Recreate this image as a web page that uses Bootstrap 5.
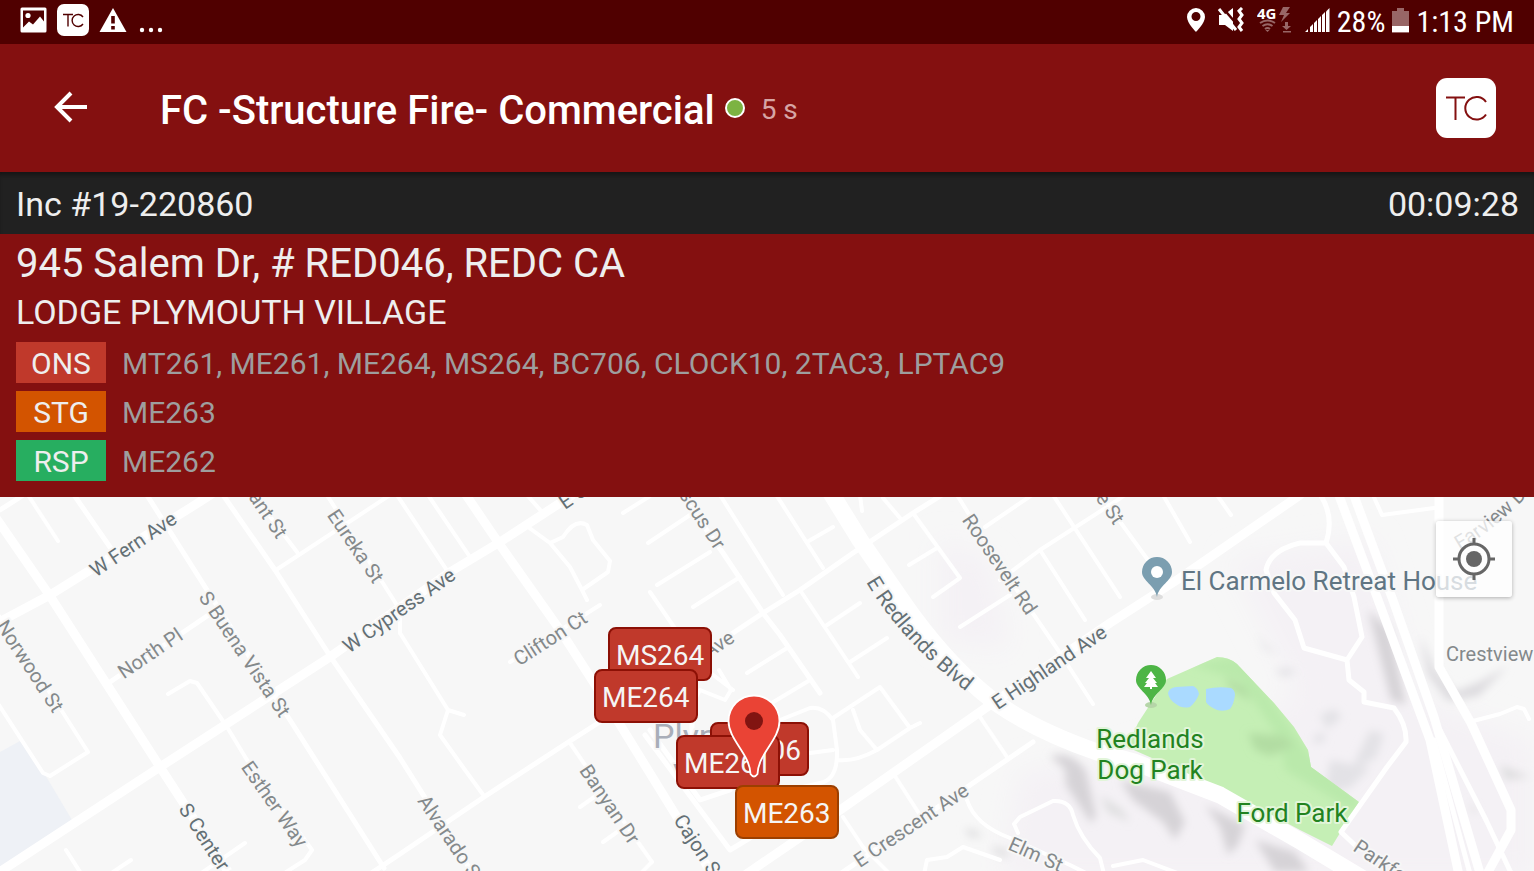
<!DOCTYPE html>
<html lang="en">
<head>
<meta charset="utf-8">
<meta name="viewport" content="width=device-width, initial-scale=1">
<title>FC -Structure Fire- Commercial</title>
<link href="https://cdn.jsdelivr.net/npm/bootstrap@5.3.0/dist/css/bootstrap.min.css" rel="stylesheet">
<style>
  body { font-family: Roboto, "Liberation Sans", sans-serif; background: #841010; color: #eee; }
  .status-bar { height: 44px; background: #500000; color: #fff; padding: 0 20px 4px; font-family: "Roboto Condensed", Roboto, sans-serif; font-size: 30px; line-height: 40px; }
  .status-left { gap: 10px; }
  .status-right { gap: 12px; }
  .status-power { gap: 7px; }
  .app-bar { height: 128px; padding: 4px 38px 0 48px; }
  .app-title { font-size: 40px; line-height: 48px; font-weight: 500; color: #fff; margin-left: 66px; padding-top: 2px; }
  .live-dot { width: 20px; height: 20px; border: 2px solid #fff; border-radius: 50%; background: #7cb342; margin: 0 16px 4px 10px; }
  .age { font-size: 28px; line-height: 48px; color: #d6a5a5; }
  .inc-bar { height: 62px; padding: 2px 15px 0 16px; background: #212121; font-size: 34px; line-height: 60px; box-shadow: inset 0 5px 4px -2px #151515; }
  .details { padding: 6px 16px 16px; }
  .address { font-size: 40px; line-height: 48px; }
  .place { font-size: 34px; line-height: 48px; margin-bottom: 6px; }
  .units { font-size: 30px; line-height: 41px; color: #9e9e9e; }
  .unit-tag { width: 90px; padding-top: 2px; line-height: 39px; color: #eee; text-align: center; }
  .unit-list { padding-top: 2px; line-height: 39px; }
  .ons { background: #c0392b; }
  .stg { background: #d35400; }
  .rsp { background: #27ae60; }
  .map { background: #f7f7f7; min-height: 320px; }
  .roads path { fill: none; stroke: #fff; stroke-width: 4; stroke-linejoin: round; stroke-linecap: round; }
  .roads .mid { stroke-width: 5; }
  .roads .wide { stroke-width: 9; }
  .roads .main { stroke-width: 17; }
  .labels text { font-size: 20px; fill: #84898b; stroke: #f7f7f7; stroke-width: 4px; paint-order: stroke; stroke-linejoin: round; }
  .labels .major { fill: #647075; }
  .labels .arterial { font-size: 21px; }
  .labels .poi { font-size: 26px; fill: #607583; }
  .labels .park { font-size: 26px; fill: #22831f; stroke: #e2f5d9; }
  .labels .town { font-size: 34px; fill: #a9aeb9; }
  .unit-pin { position: absolute; height: 54px; padding: 4px 6px 0; border: 2px solid #8c1005; border-radius: 8px; background: #c0392b; color: #f5f5f5; font-size: 28px; line-height: 46px; white-space: nowrap; }
  .unit-pin.staging { background: #d35400; border-color: #9c3f00; }
  .p-ms264 { left: 608px; top: 130px; }
  .p-me264 { left: 594px; top: 172px; }
  .p-bc706 { left: 710px; top: 225px; }
  .p-me261 { left: 676px; top: 238px; }
  .p-me263 { left: 735px; top: 288px; }
  .incident { position: absolute; left: 727px; top: 197px; }
  .locate { position: absolute; right: 22px; top: 24px; width: 76px; height: 76px; border: 0; border-radius: 3px; background: rgba(255,255,255,.75); box-shadow: 0 1px 4px rgba(0,0,0,.3); }
</style>
</head>
<body class="d-flex flex-column vh-100 overflow-hidden">

<div class="status-bar d-flex align-items-center justify-content-between flex-shrink-0">
  <div class="status-left d-flex align-items-center">
    <svg width="27" height="26" viewBox="0 0 27 26"><path fill="#fff" fill-rule="evenodd" d="M2 0.500h23q1.500 0 1.500 1.500v22q0 1.500-1.500 1.500H2Q.5 25.500.5 24V2Q.5.500 2 .500zM3 3.500v17l6-6 4 3 7-8 4 5V3.500z"/><circle cx="8" cy="8.500" r="2.600" fill="#fff"/></svg>
    <svg width="32" height="32" viewBox="0 0 32 32"><rect width="32" height="32" rx="7" fill="#fff"/><path d="M6 10.500h10M11 10.500v12M26 13a6 6 0 1 0 0 7" fill="none" stroke="#500000" stroke-width="1.400"/></svg>
    <svg width="28" height="26" viewBox="0 0 28 26"><path fill="#fff" d="M14 1 27.500 25H.5z"/><path stroke="#500000" stroke-width="3.600" d="M14 9v7.500M14 19v3.500"/></svg>
    <svg width="26" height="26" viewBox="0 0 26 26" fill="#fff"><circle cx="5" cy="23" r="2.200"/><circle cx="14" cy="23" r="2.200"/><circle cx="23" cy="23" r="2.200"/></svg>
  </div>
  <div class="status-right d-flex align-items-center">
    <svg width="18" height="24" viewBox="0 0 18 24"><path fill="#fff" fill-rule="evenodd" d="M9 0a9 9 0 0 1 9 9c0 6-9 15-9 15S0 15 0 9a9 9 0 0 1 9-9zm0 4a4.500 4.500 0 1 0 0 9 4.500 4.500 0 0 0 0-9z"/></svg>
    <svg width="28" height="26" viewBox="0 0 28 26"><path fill="#fff" d="M2 8h5l9-7v23l-8-6H2z"/><path stroke="#500000" stroke-width="2.500" d="M5 0 23 21"/><path stroke="#fff" stroke-width="3" d="m2 2 17 21"/><path fill="none" stroke="#fff" stroke-width="3" d="m25 1-3 3 3 4-3 4 3 4-3 4 3 4"/></svg>
    <svg width="36" height="26" viewBox="0 0 36 26"><text x="0" y="12" font-family="Noto Sans, sans-serif" font-weight="700" font-size="15" fill="#fff">4G</text><g fill="none" stroke="#986666" stroke-width="2"><path d="M3 16q7.500-5 15 0M5.500 19q5-3.500 10 0M8 22q2.500-2 5 0"/></g><g fill="#986666"><path d="m8.500 23 2 2 2-2zM26 0h7l-4 6h4L24 15l3-7h-5zM28 15h3v4h3l-4.500 4-4.500-4h3zM26 24h8v1.500h-8z"/></g></svg>
    <div class="status-power d-flex align-items-center">
      <svg width="25" height="25" viewBox="0 0 25 25"><path fill="#fff" d="M0 24h3v-3zM5 24h3v-8l-3 3zM9 24h3V12l-3 3zM13 24h3V8l-3 3zM17 24h3V4l-3 3z"/><path fill="#fff" d="M21 24h3.500V0L21 3.500z"/></svg>
      <span class="pt-1">28%</span>
      <svg width="17" height="25" viewBox="0 0 17 25"><path fill="#986666" d="M5 0h7v3h5v22H0V3h5z"/><path fill="#fff" d="M0 18h17v6H0z"/></svg>
      <span class="pt-1">1:13 PM</span>
    </div>
  </div>
</div>

<header class="app-bar d-flex align-items-center flex-shrink-0">
  <button class="btn p-0 border-0 mb-1" aria-label="Back"><svg width="46" height="46" viewBox="0 0 46 46" class="d-block"><path d="M39 22H9M23 8 9 22l14 14" fill="none" stroke="#fff" stroke-width="4"/></svg></button>
  <h1 class="app-title mb-0 text-nowrap">FC -Structure Fire- Commercial</h1>
  <span class="live-dot flex-shrink-0"></span>
  <span class="age text-nowrap">5 s</span>
  <button class="btn p-0 border-0 ms-auto mb-1" aria-label="TC"><svg width="60" height="60" viewBox="0 0 60 60" class="d-block"><rect width="60" height="60" rx="11" fill="#fff"/><path d="M10 19.500h19M19.500 19.500V42M50 24a11.300 11.300 0 1 0 0 12.500" fill="none" stroke="#841010" stroke-width="2"/></svg></button>
</header>

<div class="inc-bar d-flex justify-content-between flex-shrink-0"><span>Inc #19-220860</span><span>00:09:28</span></div>

<section class="details flex-shrink-0">
  <div class="address">945 Salem Dr, # RED046, REDC CA</div>
  <div class="place">LODGE PLYMOUTH VILLAGE</div>
  <div class="units d-flex flex-column gap-2">
    <div class="d-flex gap-3"><span class="unit-tag ons">ONS</span><span class="unit-list">MT261, ME261, ME264, MS264, BC706, CLOCK10, 2TAC3, LPTAC9</span></div>
    <div class="d-flex gap-3"><span class="unit-tag stg">STG</span><span class="unit-list">ME263</span></div>
    <div class="d-flex gap-3"><span class="unit-tag rsp">RSP</span><span class="unit-list">ME262</span></div>
  </div>
</section>

<main class="map position-relative overflow-hidden flex-grow-1">
  <svg class="position-absolute top-0 start-0 w-100 h-100">
    <defs>
      <filter id="soft" x="-30%" y="-30%" width="160%" height="160%"><feGaussianBlur stdDeviation="4"/></filter>
      <filter id="haze" x="-30%" y="-30%" width="160%" height="160%"><feGaussianBlur stdDeviation="14"/></filter>
      <path id="blvd" d="M866 582Q903 645 975 698"/>
      <path id="farview" d="M1460 550Q1495 530 1535 488"/>
      <clipPath id="parkclip"><path d="M1217 657q12 0 20 7L1274 703l20 24 14 23 3 17 48 35-27 44-32-16-80-42-93-41 11-24 13-20 16-24z"/></clipPath>
    </defs>
    <g transform="translate(0 -497)">
      <!-- terrain -->
      <g fill="#f4f1f5" filter="url(#haze)">
        <path d="M1230 560 1370 540 1420 700 1534 740V880H1000L1020 770 1120 760 1300 700z"/>
        <path d="M940 540l50 20 20 90-70-10zM1280 640l80 20 60 80-60 60-60-70z"/>
      </g>
      <g fill="#d6d3d7" filter="url(#soft)">
        <path d="M1050 756q22-6 36 15l10 45-5 7-25-38-1-16z"/>
        <path d="M1120 780l50 12 15 30-10 18-12-18-30-22z"/>
        <path d="M1205 805l40 20-7 20-10 10-8-28z"/>
        <path d="M1255 840l40 12 14 20h-34z"/>
        <path d="M1368 610l22 20 16 75-15-5z"/>
        <path d="M1420 635l15 35 20 22 25-10 28-16-30 30-30 5-20-26z" fill="#dcdade"/>
        <path d="M1320 715l14-6 8 8-15 12zM1315 735l10-2v8l-12 3zM1370 730l14 4-8 24-24 12 6-15zM1256 632l8 12 14 10-14-5zM1275 670l14-2 8 4-14 5zM1330 760l40 8-20 20-25 5z" fill="#e3e2e6"/>
        <path d="M965 828l14 4 2 6-13-2zM992 846l16 5v7l-14-5zM1100 795l22 15 8 12-22-10zM1500 765l30 12-25 3zM1470 800l8 14-6-2z" fill="#dededf"/>
      </g>
      <path d="M0 752 20 741 47 778 72 820v8L0 872z" fill="#eef1f6"/>
      <!-- park and ponds -->
      <path d="M1217 657q12 0 20 7L1274 703l20 24 14 23 3 17 48 35-27 44-32-16-80-42-93-41 11-24 13-20 16-24z" fill="#c5efb5"/>
      <g clip-path="url(#parkclip)"><g filter="url(#soft)" fill="#b2dda3"><path d="M1190 665l50-10 70 100 50 45-5 12-50-30-20-12-5-30-40-60z" fill="#bae9ab"/><path d="M1225 677l20 10 6 15-22-15zM1248 733l36 3 10 10-24 10-15-6z"/></g></g>
      <path fill="#aadaff" d="M1168 693q1-5 8-6l17-1q5 2 6 8-3 8-9 13-8 2-14-3-7-4-8-11zM1206 689q12-3 25-1 4 2 4 7-1 9-5 14-6 3-13 1-9-4-11-8z"/>

      <g class="roads">
        <path class="mid" d="M0 510 22 496"/><path d="M28 495 58 541"/>
        <path class="mid" d="M74 495 112 550M145 492 207 590 290 720 384 868M110 682 210 614M223 495 275 570 330 656 400 758 480 885"/>
        <path d="M276 570 390 495M250 490 297 552M325 492 400 610M400 633 448 710 440 735 460 763 484 796M448 710 464 715"/>
        <path d="M168 694 190 681 197 683 227 727 247 760 312 850 305 860 283 874M-5 610 60 708 88 752 50 776 43 773-3 702M66 850 82 875M131 860 110 874M245 843 200 874"/>
        <path d="M400 610V633"/>
        <path class="mid" d="M370 874 400 854 484 797 570 741 620 709"/>
        <path d="M395 492 448 572M428 495 470 557M527 495 542 512M528 527 550 543 570 567 582 590 587 600M550 543 563 537Q575 518 587 525L593 540 610 561 608 572 582 590M600 605 510 662"/>
        <path d="M623 513 650 496M648 543 690 515M657 585 710 552M693 607 740 577M720 495 783 595M775 493 823 568M747 673 787 648M740 722 810 680M650 592 700 665 733 690M719 670 731 690 725 700 700 690 690 708"/>
        <path class="mid" d="M680 493 723 553 763 613 780 635 820 693M700 655 763 613 800 590 853 553 913 513 942 495"/>
        <path class="mid" d="M645 735 730 850 770 826M650 730 700 800 730 790M692 720V735"/>
        <path d="M570 743 640 845 652 862 640 874M580 807 600 793M603 842 620 830"/>
        <path d="M807 542 833 527M800 590 858 677M827 625 860 603M850 662 887 638M862 511 860 495M883 498 900 518M913 513 960 578 933 597M909 565 937 548"/>
        <path d="M957 495 1010 580 1058 650 1093 704M960 627 1010 595M1000 580 1040 550 1110 505 1125 495M985 527 1032 495M1053 495 1120 597M1040 550 1085 620M1097 490 1153 567M1163 495 1190 542M1217 495 1231 515"/>
        <path d="M780 720 810 708Q823 706 833 720L837 750Q838 780 820 783L790 790M833 718 880 687 910 728 877 750Q855 762 838 760M853 710 860 730 877 750M910 728 920 723M810 753 833 750"/>
        <path d="M980 717 1007 757M893 773 920 815M843 817 863 847 890 874"/><path class="mid" d="M1033 742 840 874"/>
        <path d="M967 800Q975 825 1010 838L1070 865 1100 880M1018 833 1014 824 1020 817 1053 801Q1070 800 1073 815 1080 838 1100 858L1104 874M924 874 927 860 947 857 963 847 1000 860M1113 866 1143 860 1180 874"/>
        <path class="wide" d="M-10 627 50 595 190 508 215 492M-8 512 50 596 160 767 240 890M-5 875 160 767 330 657 450 572 500 542 580 490M464 492 500 545 560 630 603 697 680 822 712 874"/>
        <path class="wide" d="M745 875 843 808 987 707 1110 623 1180 578 1300 495"/>
        <path class="main" d="M826 485 860 540 905 605Q940 655 980 690T1097 752L1134 762 1220 795 1300 841 1365 880"/>
        <path class="wide" d="M1335 485 1377 597 1430 740 1460 880M1350 485 1394 603 1434 717 1482 880"/>
        <path class="wide" d="M1439 485V667L1471 723 1511 810V830L1487 874"/>
        <path class="mid" d="M1440 730 1486 820 1512 875M1434 740 1470 874"/>
        <path d="M1373 495 1382 515 1434 508M1473 721 1500 714 1517 707 1524 709 1529 719"/>
        <path class="mid" d="M1319 493Q1335 515 1326 543L1344 567 1354 597 1362 637 1347 660 1349 680 1364 692V702L1394 708Q1407 725 1406 742L1387 767 1341 832 1358 848M1326 543 1300 543Q1270 550 1266 570L1274 593 1295 620 1304 648 1347 660"/>
      </g>

      <g class="labels">
        <text class="major" text-anchor="middle" transform="translate(137 550) rotate(-34)">W Fern Ave</text>
        <text text-anchor="end" transform="translate(277 540) rotate(56)">ant St</text>
        <text text-anchor="middle" transform="translate(350 550) rotate(56)">Eureka St</text>
        <text text-anchor="middle" transform="translate(239 658) rotate(56)">S Buena Vista St</text>
        <text text-anchor="middle" transform="translate(154 659) rotate(-34)">North Pl</text>
        <text class="major" text-anchor="middle" transform="translate(403 616) rotate(-35)">W Cypress Ave</text>
        <text text-anchor="end" transform="translate(53 714) rotate(57)">Norwood St</text>
        <text class="major" transform="translate(178 809) rotate(57)">S Center St</text>
        <text text-anchor="middle" transform="translate(269 808) rotate(55)">Esther Way</text>
        <text class="major" transform="translate(565 510) rotate(-35)">E C</text>
        <text text-anchor="middle" transform="translate(554 644) rotate(-33)">Clifton Ct</text>
        <text text-anchor="end" transform="translate(715 551) rotate(57)">scus Dr</text>
        <text text-anchor="end" transform="translate(736 641) rotate(-33)">Ave</text>
        <text class="town" x="653" y="748">Plymouth</text><text class="town" x="673" y="788">Village</text>
        <text text-anchor="middle" transform="translate(604 808) rotate(56)">Banyan Dr</text>
        <text class="major" transform="translate(673 820) rotate(57)">Cajon St</text>
        <text transform="translate(417 801) rotate(56)">Alvarado St</text>
        <text class="major arterial"><textPath href="#blvd">E Redlands Blvd</textPath></text>
        <text class="major" text-anchor="middle" transform="translate(1053 673) rotate(-34)">E Highland Ave</text>
        <text text-anchor="middle" transform="translate(994 568) rotate(56)">Roosevelt Rd</text>
        <text text-anchor="end" transform="translate(1114 526) rotate(56)">e St</text>
        <text text-anchor="middle" transform="translate(915 831) rotate(-34)">E Crescent Ave</text>
        <text transform="translate(1007 849) rotate(24)">Elm St</text>
        <text transform="translate(1352 850) rotate(34)">Parkfo</text>
        <text x="1446" y="661">Crestview</text>
        <text><textPath href="#farview">Farview D</textPath></text>
        <text class="poi" x="1181" y="590">El Carmelo Retreat House</text>
        <text class="park" x="1150" y="748" text-anchor="middle">Redlands</text>
        <text class="park" x="1150" y="779" text-anchor="middle">Dog Park</text>
        <text class="park" x="1292" y="822" text-anchor="middle">Ford Park</text>
      </g>
      <g><ellipse cx="1157" cy="597" rx="6" ry="3" fill="#ddd"/><path fill="#7b9eb0" d="M1157 557a15 15 0 0 1 15 15c0 9-13 13-15 25-2-12-15-16-15-25a15 15 0 0 1 15-15z"/><circle cx="1157" cy="572" r="6" fill="#fff"/></g>
      <g><ellipse cx="1151" cy="705" rx="6" ry="3" fill="#b5d5a8"/><path fill="#4db546" d="M1151 665a15 15 0 0 1 15 15c0 9-13 13-15 25-2-12-15-16-15-25a15 15 0 0 1 15-15z"/><path fill="#fff" d="m1151 671 5 7h-3l4 5h-2l3 4h-6v2h-2v-2h-6l3-4h-2l4-5h-3z"/></g>
    </g>
  </svg>

  <button class="unit-pin p-ms264">MS264</button>
  <button class="unit-pin p-me264">ME264</button>
  <button class="unit-pin p-bc706">BC706</button>
  <button class="unit-pin p-me261">ME261</button>
  <button class="unit-pin staging p-me263">ME263</button>
  <svg class="incident" width="54" height="84" viewBox="0 0 54 84"><path d="M27 1.500A25.500 25.500 0 0 1 52.500 27C52.500 46 31 60 30.500 80q-3.500 5-7 0C23 60 1.500 46 1.500 27A25.500 25.500 0 0 1 27 1.500z" fill="#ea4335" stroke="#fff" stroke-width="1.800"/><circle cx="27" cy="27" r="9" fill="#811411"/></svg>
  <button class="locate d-flex align-items-center justify-content-center p-0" aria-label="My location"><svg width="42" height="42" viewBox="0 0 42 42"><circle cx="21" cy="21" r="8" fill="#666"/><g fill="none" stroke="#666" stroke-width="3"><circle cx="21" cy="21" r="15"/><path d="M21 0v6M21 36v6M0 21h6M36 21h6"/></g></svg></button>
</main>
<script src="https://cdn.jsdelivr.net/npm/bootstrap@5.3.0/dist/js/bootstrap.bundle.min.js"></script>
</body>
</html>
